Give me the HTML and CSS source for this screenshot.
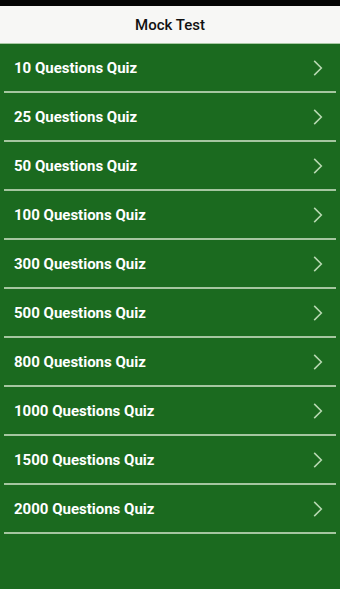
FILE: index.html
```html
<!DOCTYPE html>
<html>
<head>
<meta charset="utf-8">
<link rel="stylesheet" href="styles.css">
</head>
<body>
<div class="status"></div>
<header class="bar">Mock Test</header>
<main class="list">
  <div class="row"><span>10 Questions Quiz</span><svg class="chev" viewBox="0 0 10 16"><path d="M2 1.5 L8.5 8 L2 14.5"/></svg></div>
  <div class="row"><span>25 Questions Quiz</span><svg class="chev" viewBox="0 0 10 16"><path d="M2 1.5 L8.5 8 L2 14.5"/></svg></div>
  <div class="row"><span>50 Questions Quiz</span><svg class="chev" viewBox="0 0 10 16"><path d="M2 1.5 L8.5 8 L2 14.5"/></svg></div>
  <div class="row"><span>100 Questions Quiz</span><svg class="chev" viewBox="0 0 10 16"><path d="M2 1.5 L8.5 8 L2 14.5"/></svg></div>
  <div class="row"><span>300 Questions Quiz</span><svg class="chev" viewBox="0 0 10 16"><path d="M2 1.5 L8.5 8 L2 14.5"/></svg></div>
  <div class="row"><span>500 Questions Quiz</span><svg class="chev" viewBox="0 0 10 16"><path d="M2 1.5 L8.5 8 L2 14.5"/></svg></div>
  <div class="row"><span>800 Questions Quiz</span><svg class="chev" viewBox="0 0 10 16"><path d="M2 1.5 L8.5 8 L2 14.5"/></svg></div>
  <div class="row"><span>1000 Questions Quiz</span><svg class="chev" viewBox="0 0 10 16"><path d="M2 1.5 L8.5 8 L2 14.5"/></svg></div>
  <div class="row"><span>1500 Questions Quiz</span><svg class="chev" viewBox="0 0 10 16"><path d="M2 1.5 L8.5 8 L2 14.5"/></svg></div>
  <div class="row"><span>2000 Questions Quiz</span><svg class="chev" viewBox="0 0 10 16"><path d="M2 1.5 L8.5 8 L2 14.5"/></svg></div>
</main>
</body>
</html>
```
FILE: styles.css
```css
html, body {
  margin: 0;
  padding: 0;
  height: 100%;
}
body {
  background: #1b6a1f;
  font-family: Roboto, "Liberation Sans", sans-serif;
  display: flex;
  flex-direction: column;
}
.status {
  height: 6px;
  background: #050505;
}
.bar {
  height: 37px;
  background: #f7f7f5;
  border-bottom: 1px solid #a9c9a4;
  display: flex;
  align-items: center;
  justify-content: center;
  font-size: 15px;
  font-weight: 500;
  color: #111;
}
.list {
  flex: 1;
  background: #1b6a1f;
  padding: 0 4px;
  display: flex;
  flex-direction: column;
}
.row {
  height: 47px;
  border-bottom: 2px solid #a5c6a0;
  display: flex;
  align-items: center;
  justify-content: space-between;
  padding: 0 13px 0 10px;
  color: #fff;
  font-size: 15px;
  font-weight: 700;
}
.chev {
  width: 11px;
  height: 18px;
  fill: none;
  stroke: #b8d8b2;
  stroke-width: 1.4;
}
```
